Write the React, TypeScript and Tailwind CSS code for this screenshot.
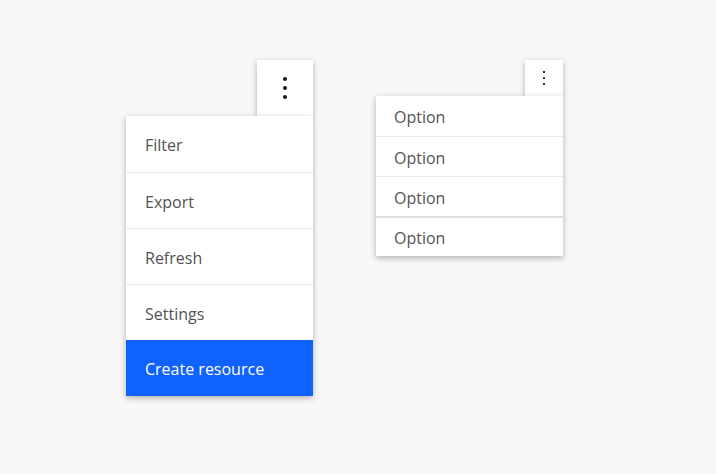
const font = { fontFamily: "'Open Sans', 'Liberation Sans', sans-serif" }

function Dots({ size }: { size: 'lg' | 'sm' }) {
  if (size === 'lg') {
    return (
      <svg width="4" height="22" viewBox="0 0 4 22" fill="#161616">
        <circle cx="2" cy="2" r="2" />
        <circle cx="2" cy="11" r="2" />
        <circle cx="2" cy="20" r="2" />
      </svg>
    )
  }
  return (
    <svg width="2" height="14" viewBox="0 0 2 14" fill="#161616">
      <circle cx="1" cy="1" r="1.1" />
      <circle cx="1" cy="7" r="1.1" />
      <circle cx="1" cy="13" r="1.1" />
    </svg>
  )
}

export default function App() {
  const big = ['Filter', 'Export', 'Refresh', 'Settings']

  return (
    <div className="w-full h-[474px] bg-[#f8f8f8] overflow-hidden" style={font}>
      <div className="flex items-start gap-[63px] pl-[126px] pt-[60px]">

        {/* Large overflow menu */}
        <div className="w-[187px] flex flex-col items-end">
          <div className="relative w-14 h-14 bg-white flex items-center justify-center shadow-[0_2px_6px_rgba(0,0,0,0.3)]">
            <Dots size="lg" />
          </div>
          <div className="relative z-10 w-full bg-white shadow-[0_2px_6px_rgba(0,0,0,0.3)]">
            {big.map((label, i) => (
              <div
                key={label}
                className={`h-14 flex items-center pl-[19px] pt-[2px] text-[16px] text-[#525252] ${i > 0 ? 'border-t border-[#ebebeb]' : ''}`}
              >
                {label}
              </div>
            ))}
            <div className="h-14 flex items-center pl-[19px] pt-[2px] text-[16px] text-white bg-[#0f62fe]">
              Create resource
            </div>
          </div>
        </div>

        {/* Small overflow menu */}
        <div className="w-[187px] flex flex-col items-end">
          <div className="relative w-[38px] h-9 bg-white flex items-center justify-center shadow-[0_2px_6px_rgba(0,0,0,0.3)]">
            <Dots size="sm" />
          </div>
          <div className="relative z-10 w-full bg-white shadow-[0_2px_6px_rgba(0,0,0,0.3)]">
            <div className="h-10 flex items-center pl-[18px] pt-[2px] text-[16px] text-[#525252]">Option</div>
            <div className="h-10 flex items-center pl-[18px] pt-[2px] text-[16px] text-[#525252] border-t border-[#ebebeb]">Option</div>
            <div className="h-10 flex items-center pl-[18px] pt-[2px] text-[16px] text-[#525252] border-t border-[#ebebeb]">Option</div>
            <div className="h-10 flex items-center pl-[18px] pt-[2px] text-[16px] text-[#525252] border-t-2 border-[#e0e0e0]">Option</div>
          </div>
        </div>

      </div>
    </div>
  )
}
